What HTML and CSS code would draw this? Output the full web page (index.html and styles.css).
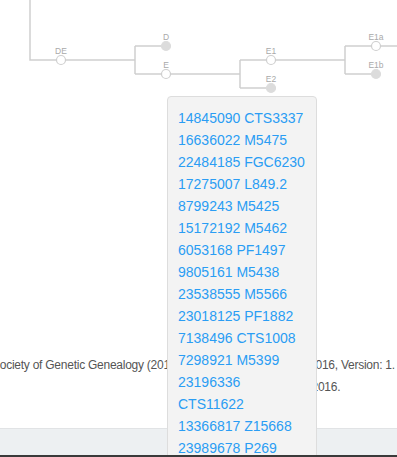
FILE: index.html
```html
<!DOCTYPE html>
<html lang="en">
<head>
<meta charset="UTF-8">
<meta name="viewport" content="width=device-width, initial-scale=1.0">
<title>Haplogroup E</title>
<link rel="stylesheet" href="styles.css">
</head>
<body>
<div id="page">
    <svg class="tree" width="397" height="100" viewBox="0 0 397 100">
        <path class="link" d="M30 0 V60 H135 M135 46 V74 M135 46 H166 M135 74 H240 M240 60 V88 M240 60 H345 M240 88 H271 M345 46 V74 M345 46 H397 M345 74 H376"/>
        <circle class="node" cx="61" cy="60" r="4.5"/>
        <circle class="node leaf" cx="166" cy="46" r="4.5"/>
        <circle class="node" cx="166" cy="74" r="4.5"/>
        <circle class="node" cx="271" cy="60" r="4.5"/>
        <circle class="node leaf" cx="271" cy="88" r="4.5"/>
        <circle class="node" cx="376" cy="46" r="4.5"/>
        <circle class="node leaf" cx="376" cy="74" r="4.5"/>
        <text class="label" x="61" y="54">DE</text>
        <text class="label" x="166" y="40">D</text>
        <text class="label" x="166" y="68">E</text>
        <text class="label" x="271" y="54">E1</text>
        <text class="label" x="271" y="82">E2</text>
        <text class="label" x="376" y="40">E1a</text>
        <text class="label" x="376" y="68">E1b</text>
    </svg>

    <div class="citation">
        <p class="cite-line first">Society of Genetic Genealogy (2016) Y-DNA Haplogroup Tree 2016, Version: 1.</p>
        <p class="cite-line second">Accessed 12 December 2016.</p>
    </div>

    <div class="footer"></div>
</div>

<div class="popover">
    <ul class="snp-list">
        <li><a href="#">14845090 CTS3337</a></li>
        <li><a href="#">16636022 M5475</a></li>
        <li><a href="#">22484185 FGC6230</a></li>
        <li><a href="#">17275007 L849.2</a></li>
        <li><a href="#">8799243 M5425</a></li>
        <li><a href="#">15172192 M5462</a></li>
        <li><a href="#">6053168 PF1497</a></li>
        <li><a href="#">9805161 M5438</a></li>
        <li><a href="#">23538555 M5566</a></li>
        <li><a href="#">23018125 PF1882</a></li>
        <li><a href="#">7138496 CTS1008</a></li>
        <li><a href="#">7298921 M5399</a></li>
        <li><a href="#">23196336 CTS11622</a></li>
        <li><a href="#">13366817 Z15668</a></li>
        <li><a href="#">23989678 P269</a></li>
        <li><a href="#">21473120 M5479</a></li>
    </ul>
</div>

<div class="window-edge"></div>
</body>
</html>
```

FILE: styles.css
```css
html {
  overflow: hidden;
}

body {
  margin: 0;
  font-family: 'Liberation Sans', Arial, sans-serif;
  background-color: #fff;
  color: #555;
}

#page {
  height: 457px;
  display: flex;
  flex-direction: column;
}

.tree {
  display: block;
}

.link {
  fill: none;
  stroke: #cfcfcf;
  stroke-width: 1.5;
}

.node {
  fill: #fff;
  stroke: #cfcfcf;
  stroke-width: 1.2;
}

.node.leaf {
  fill: #dcdcdc;
  stroke: #dcdcdc;
}

.label {
  font-size: 8.5px;
  fill: #a9a9a9;
  text-anchor: middle;
}

.citation {
  margin-top: 254px;
  font-size: 12px;
  line-height: 22px;
  letter-spacing: -0.25px;
  white-space: nowrap;
}

.cite-line {
  margin: 0;
}

.cite-line.first {
  margin-left: -8px;
}

.cite-line.second {
  padding-left: 186px;
}

.footer {
  flex: 1;
  margin-top: 30px;
  background-color: #edf0f2;
  border-top: 1px solid #e1e3e5;
}

.popover {
  position: absolute;
  top: 96px;
  left: 167px;
  width: 128px;
  padding: 10px 10px;
  background-color: #f3f3f3;
  border: 1px solid #dddddd;
  border-radius: 4px;
}

.snp-list {
  list-style: none;
  margin: 0;
  padding: 0;
  font-size: 14px;
  line-height: 22px;
}

.snp-list a {
  color: #2a9df4;
  text-decoration: none;
}

.window-edge {
  position: fixed;
  left: 0;
  right: 0;
  bottom: 0;
  height: 2px;
  background-color: #3a3a3a;
}
```
